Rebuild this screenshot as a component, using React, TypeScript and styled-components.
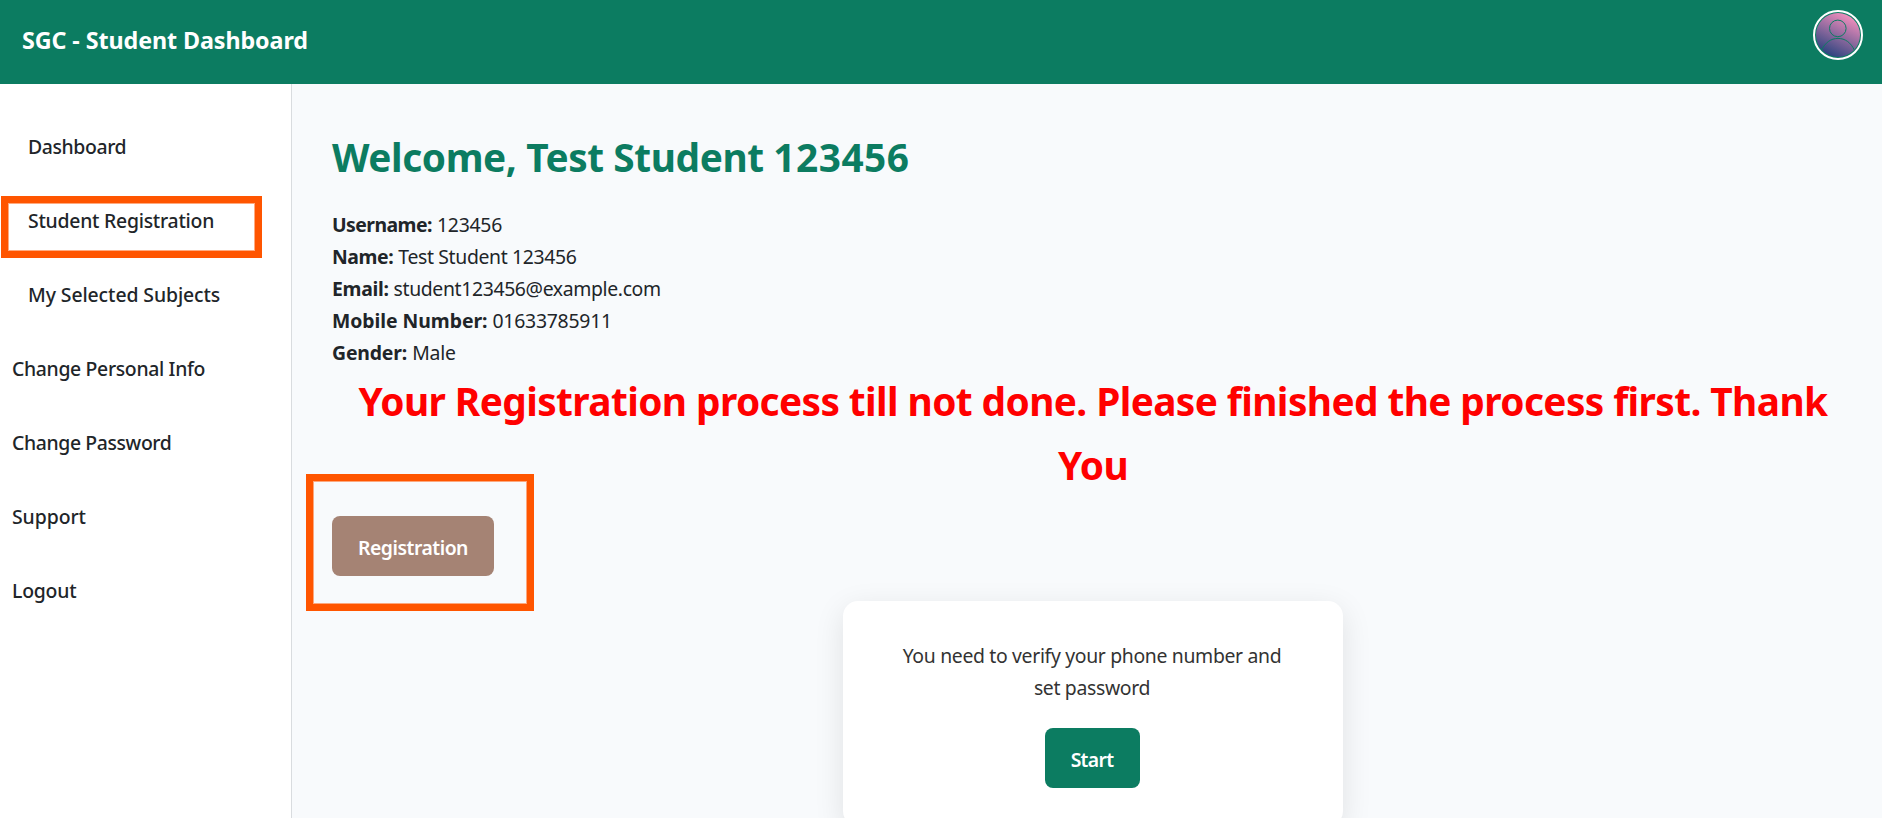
import React from 'react';
import styled, { createGlobalStyle, css } from 'styled-components';

const colors = {
  green: '#0c7c61',
  brown: '#a58374',
  text: '#212529',
  page: '#f8fafc',
  danger: '#ff0000',
  mark: '#ff5500',
};

const GlobalStyle = createGlobalStyle`
  * {
    box-sizing: border-box;
  }

  body {
    margin: 0;
    overflow: hidden;
    background: ${colors.page};
    color: ${colors.text};
    font-family: 'Segoe UI', 'Noto Sans', sans-serif;
    font-size: 19.4px;
    line-height: 32px;
  }
`;

const Page = styled.div`
  display: flex;
  flex-direction: column;
  height: 100vh;
  overflow: hidden;
`;

const Header = styled.header`
  display: flex;
  flex: none;
  justify-content: space-between;
  align-items: flex-start;
  height: 84px;
  padding: 10px 19px 0 22px;
  background: ${colors.green};
`;

const Brand = styled.div`
  padding-top: 14px;
  color: #fff;
  font-size: 23.3px;
  font-weight: 700;
  letter-spacing: -0.09px;
`;

const Avatar = styled.svg`
  display: block;
  width: 50px;
  height: 50px;
`;

const Body = styled.div`
  display: flex;
  flex: 1;
  min-height: 0;
`;

const Sidebar = styled.nav`
  display: flex;
  flex: none;
  flex-direction: column;
  gap: 42px;
  width: 292px;
  padding: 47px 11px;
  border-right: 1px solid #d9dcdf;
  background: #fff;
`;

const highlight = css`
  position: absolute;
  border: 7px solid ${colors.mark};
  box-shadow: inset 0 0 0 1px rgba(255, 85, 0, 0.5);
  pointer-events: none;
`;

const NavItem = styled.a<{ $nested?: boolean; $tracking: number }>`
  position: relative;
  padding-left: ${({ $nested }) => ($nested ? 17 : 1)}px;
  font-weight: 500;
  letter-spacing: ${({ $tracking }) => $tracking}px;
  white-space: nowrap;
`;

const NavHighlight = styled.span`
  ${highlight}
  top: -9px;
  left: -10px;
  width: 261px;
  height: 62px;
`;

const Main = styled.main`
  flex: 1;
  min-width: 0;
  padding: 41px 28px 0 40px;
`;

const Title = styled.h1`
  margin: 0 0 20px;
  color: ${colors.green};
  font-size: 38.8px;
  font-weight: 700;
  line-height: 64px;
  letter-spacing: -0.41px;
`;

const StudentId = styled.span`
  letter-spacing: 0.5px;
`;

const InfoList = styled.dl`
  margin: 0;
`;

const InfoRow = styled.div`
  display: flex;
  gap: 5px;
`;

const Label = styled.dt<{ $tracking: number }>`
  font-weight: 700;
  letter-spacing: ${({ $tracking }) => $tracking}px;
`;

const Value = styled.dd<{ $tracking: number }>`
  margin: 0;
  letter-spacing: ${({ $tracking }) => $tracking}px;
`;

const Warning = styled.h1`
  margin: 0;
  color: ${colors.danger};
  font-size: 38.8px;
  font-weight: 700;
  line-height: 64px;
  letter-spacing: -0.59px;
  text-align: center;
`;

const RegistrationArea = styled.div`
  position: relative;
  width: 162px;
  margin: 19px 0 25px;
`;

const ButtonHighlight = styled.span`
  ${highlight}
  top: -42px;
  left: -26px;
  width: 228px;
  height: 137px;
`;

const Button = styled.button<{ $color: string; $width: number; $tracking: number }>`
  display: block;
  width: ${({ $width }) => $width}px;
  height: 60px;
  padding: 2px 0 0;
  border: 0;
  border-radius: 8px;
  background: ${({ $color }) => $color};
  color: #fff;
  font-family: inherit;
  font-size: 19.4px;
  font-weight: 600;
  letter-spacing: ${({ $tracking }) => $tracking}px;
`;

const Card = styled.section`
  display: flex;
  flex-direction: column;
  align-items: center;
  width: 500px;
  margin: 0 auto 0 511px;
  padding: 39px 51px 38px 49px;
  border-radius: 15px;
  background: #fff;
  box-shadow: 0 8px 30px rgba(0, 0, 0, 0.1);
`;

const CardText = styled.p`
  margin: 0 0 24px;
  color: #333;
  letter-spacing: -0.33px;
  text-align: center;
`;

interface NavEntry {
  label: string;
  tracking: number;
  nested?: boolean;
  marked?: boolean;
}

const navItems: NavEntry[] = [
  { label: 'Dashboard', tracking: -0.38, nested: true },
  { label: 'Student Registration', tracking: -0.25, nested: true, marked: true },
  { label: 'My Selected Subjects', tracking: -0.09, nested: true },
  { label: 'Change Personal Info', tracking: -0.33 },
  { label: 'Change Password', tracking: -0.37 },
  { label: 'Support', tracking: -0.05 },
  { label: 'Logout', tracking: -0.22 },
];

const info = [
  { label: 'Username:', value: '123456', labelTracking: -0.54, tracking: -0.24 },
  { label: 'Name:', value: 'Test Student 123456', labelTracking: -0.4, tracking: -0.34 },
  { label: 'Email:', value: 'student123456@example.com', labelTracking: -0.3, tracking: -0.36 },
  { label: 'Mobile Number:', value: '01633785911', labelTracking: -0.04, tracking: -0.24 },
  { label: 'Gender:', value: 'Male', labelTracking: -0.15, tracking: -0.2 },
];

const UserAvatar: React.FC = () => (
  <Avatar viewBox="0 0 50 50">
    <defs>
      <linearGradient id="avatar" x1="0.75" y1="0.05" x2="0.3" y2="0.95">
        <stop offset="0" stopColor="#f28fbd" />
        <stop offset="1" stopColor="#2f4580" />
      </linearGradient>
      <clipPath id="disc">
        <circle cx="25" cy="25" r="22" />
      </clipPath>
    </defs>
    <circle cx="25" cy="25" r="24" fill="none" stroke="#fff" strokeWidth="2" />
    <circle cx="25" cy="25" r="22" fill="url(#avatar)" />
    <g clipPath="url(#disc)" fill="none" stroke={colors.green} strokeWidth="1">
      <circle cx="24.8" cy="18.4" r="8.3" />
      <path d="M8.5 40.5C12 32.5 18 28.4 25 28.4S38 32.5 41.5 40.5" />
    </g>
  </Avatar>
);

const App: React.FC = () => (
  <Page>
    <GlobalStyle />
    <Header>
      <Brand>SGC - Student Dashboard</Brand>
      <UserAvatar />
    </Header>
    <Body>
      <Sidebar>
        {navItems.map((item) => (
          <NavItem key={item.label} $nested={item.nested} $tracking={item.tracking}>
            {item.label}
            {item.marked && <NavHighlight />}
          </NavItem>
        ))}
      </Sidebar>
      <Main>
        <Title>
          Welcome, Test Student <StudentId>123456</StudentId>
        </Title>
        <InfoList>
          {info.map((row) => (
            <InfoRow key={row.label}>
              <Label $tracking={row.labelTracking}>{row.label}</Label>
              <Value $tracking={row.tracking}>{row.value}</Value>
            </InfoRow>
          ))}
        </InfoList>
        <Warning>
          Your Registration process till not done. Please finished the process first. Thank You
        </Warning>
        <RegistrationArea>
          <Button $color={colors.brown} $width={162} $tracking={-0.5}>Registration</Button>
          <ButtonHighlight />
        </RegistrationArea>
        <Card>
          <CardText>You need to verify your phone number and set password</CardText>
          <Button $color={colors.green} $width={95} $tracking={-0.7}>Start</Button>
        </Card>
      </Main>
    </Body>
  </Page>
);

export default App;
